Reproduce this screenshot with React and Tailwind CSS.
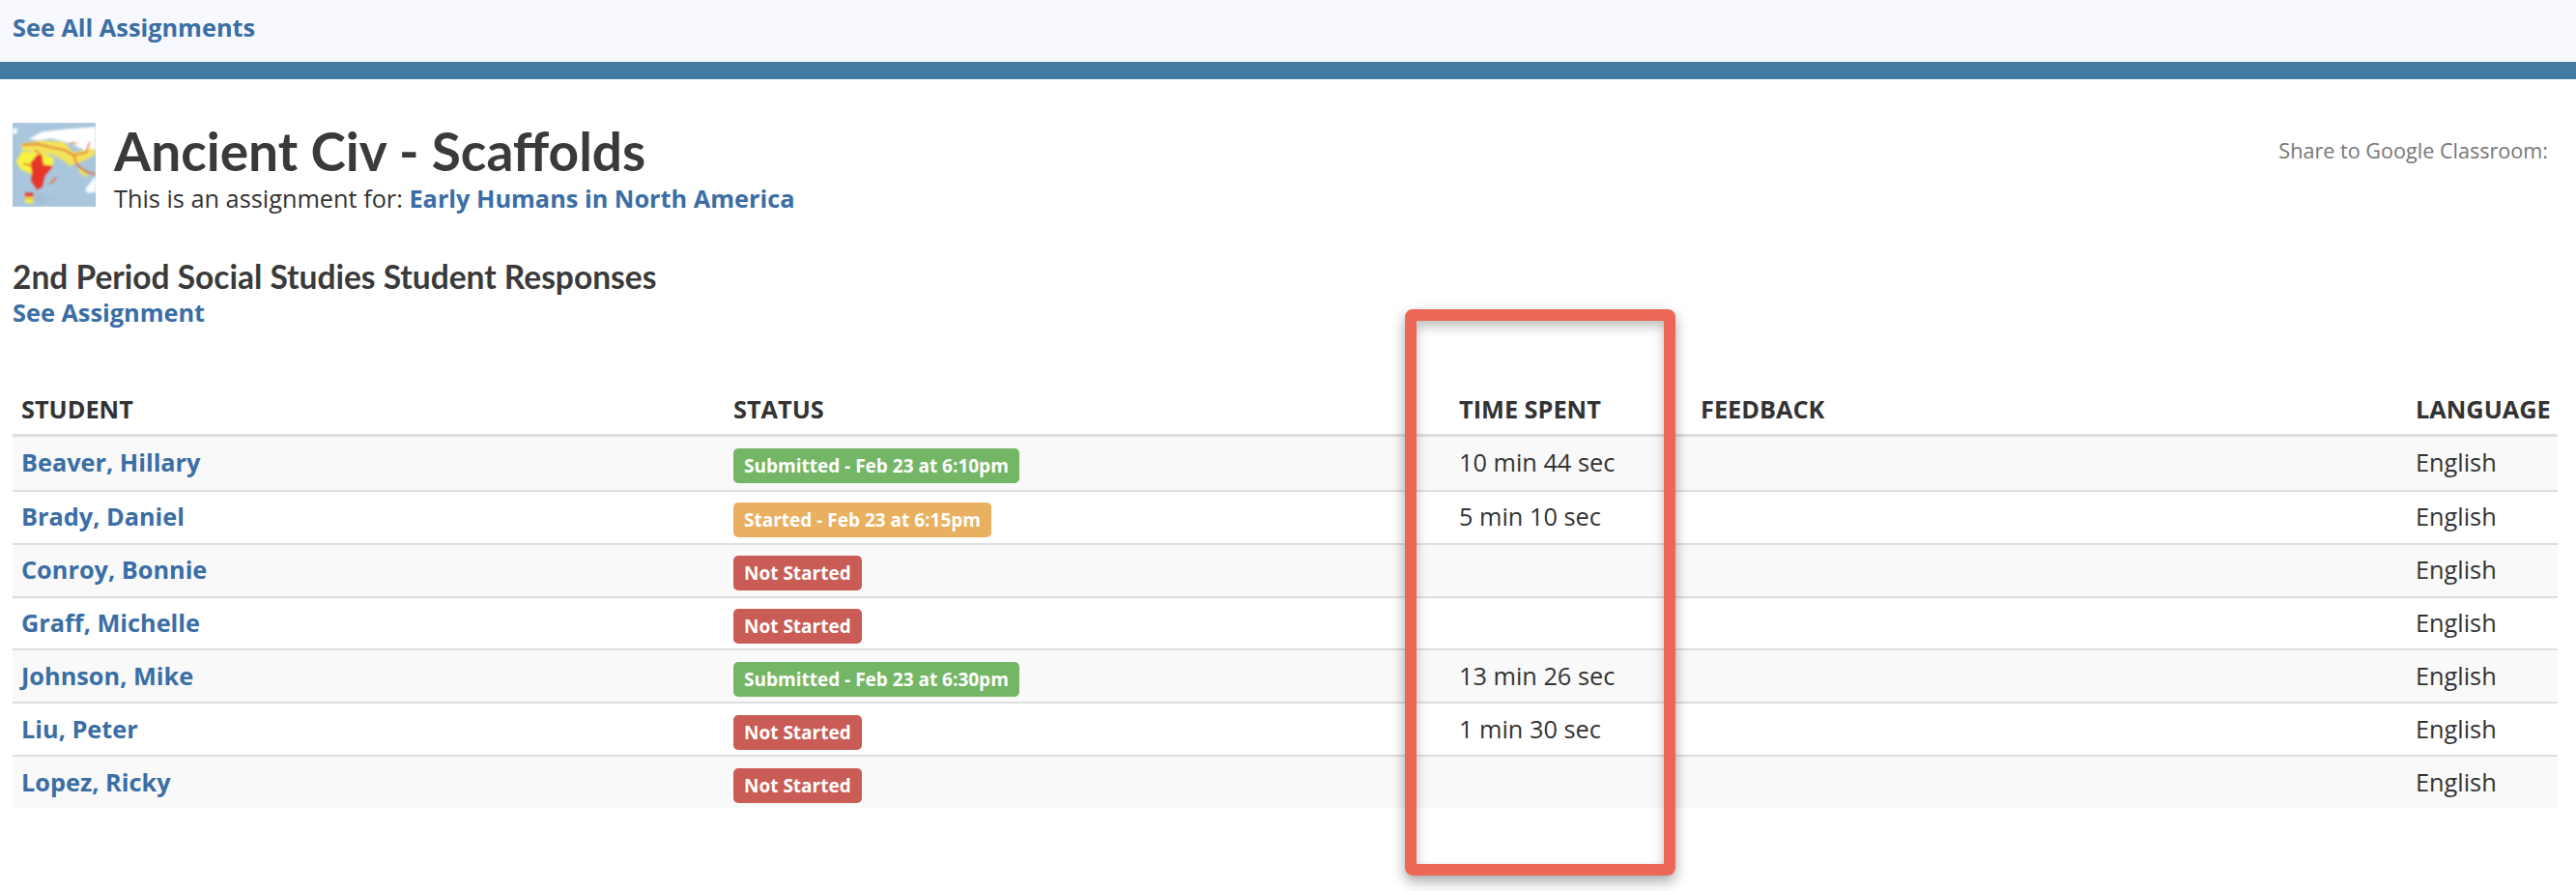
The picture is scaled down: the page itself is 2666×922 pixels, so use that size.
import React from 'react'

const rows = [
  { name: 'Beaver, Hillary', status: 'Submitted - Feb 23 at 6:10pm', kind: 'green', time: '10 min 44 sec' },
  { name: 'Brady, Daniel', status: 'Started - Feb 23 at 6:15pm', kind: 'orange', time: '5 min 10 sec' },
  { name: 'Conroy, Bonnie', status: 'Not Started', kind: 'red', time: '' },
  { name: 'Graff, Michelle', status: 'Not Started', kind: 'red', time: '' },
  { name: 'Johnson, Mike', status: 'Submitted - Feb 23 at 6:30pm', kind: 'green', time: '13 min 26 sec' },
  { name: 'Liu, Peter', status: 'Not Started', kind: 'red', time: '1 min 30 sec' },
  { name: 'Lopez, Ricky', status: 'Not Started', kind: 'red', time: '' },
]

const badgeColors = {
  green: 'bg-[#74b666]',
  orange: 'bg-[#e8b05f]',
  red: 'bg-[#c95c55]',
}

const cols = 'grid grid-cols-[737px_751px_250px_740px_156px]'

function MapThumb() {
  return (
    <svg width="86" height="87" viewBox="0 0 258 260" className="shrink-0">
      <defs>
        <filter id="soft"><feGaussianBlur stdDeviation="3" /></filter>
      </defs>
      <rect width="258" height="260" fill="#a9c6dc" />
      <g filter="url(#soft)">
        <path d="M50 50 L90 28 L160 20 L258 12 L258 85 L222 84 L176 62 L120 48 L82 54 Z" fill="#fff" />
        <path d="M0 18 L16 16 L12 32 L0 36 Z" fill="#fff" />
        <path d="M226 205 L258 165 L258 215 L232 218 Z" fill="#fff" />
        <path d="M26 65 L90 55 L160 58 L188 92 L250 78 L258 98 L222 118 L176 134 L160 118 L128 100 L30 85 Z" fill="#f2e25c" />
        <path d="M11 120 L30 88 L90 94 L128 108 L126 130 L96 154 L90 190 L60 160 L26 144 Z" fill="#f8f23f" />
        <path d="M202 140 L220 150 L238 170 L214 160 Z" fill="#f7e94a" />
        <path d="M56 124 L76 99 L91 99 L96 130 L126 134 L100 165 L92 200 L75 207 L58 180 L60 150 Z" fill="#e8352c" />
        <path d="M30 68 L80 66 L120 76 L160 84 L190 100 L228 92 L240 60 M70 84 L88 100 M190 100 L200 130 L224 150 L258 160 M34 126 L58 134 M116 190 L136 170 M180 62 L200 64"
          fill="none" stroke="#e86a30" strokeWidth="5" />
        <rect x="39" y="217" width="25" height="12" fill="#e8352c" />
        <rect x="39" y="229" width="25" height="10" fill="#f3c93c" />
        <rect x="39" y="239" width="25" height="10" fill="#f8f23f" />
        <path d="M70 223 H92 M70 234 H130 M70 244 H104" stroke="#8ea6b6" strokeWidth="2" />
      </g>
    </svg>
  )
}

export default function App() {
  return (
    <div className="relative min-h-[922px] bg-white text-[#333] font-['Open_Sans',sans-serif] text-[25.3px]">
      <div className="h-16 bg-[#f8f8ff] px-[13px] pb-[6px] flex items-center">
        <a className="font-bold text-[#3a6ea5]">See All Assignments</a>
      </div>
      <div className="h-[18px] bg-[#417ba1]" />

      <div className="px-[13px] pt-[45px] flex justify-between items-start">
        <div className="flex gap-[19px]">
          <MapThumb />
          <div>
            <h1 className="font-['Lato',sans-serif] font-bold text-[55px] leading-[58px] text-[#3a3a3a]">Ancient Civ - Scaffolds</h1>
            <p className="leading-[34px] mt-[3px]">
              This is an assignment for: <a className="font-bold text-[#3a6ea5]">Early Humans in North America</a>
            </p>
          </div>
        </div>
        <div className="text-[21.6px] text-[#777] pr-[16px] pt-[13px]">Share to Google Classroom:</div>
      </div>

      <div className="px-[13px] pt-[44px]">
        <h2 className="font-['Lato',sans-serif] font-bold text-[33.5px] leading-[40px] text-[#3a3a3a]">2nd Period Social Studies Student Responses</h2>
        <a className="block font-bold text-[#3a6ea5] leading-[34px]">See Assignment</a>

        <div className="mt-[59px] w-[2634px]">
          <div className={`${cols} h-[53px] items-center font-bold border-b-[3px] border-[#ddd]`}>
            <div className="pl-[9px]">STUDENT</div>
            <div className="pl-[9px]">STATUS</div>
            <div className="pl-[9px]">TIME SPENT</div>
            <div className="pl-[9px]">FEEDBACK</div>
            <div className="pl-[9px]">LANGUAGE</div>
          </div>
          {rows.map((r, i) => (
            <div key={r.name} className={`${cols} h-[54.86px] items-center ${i % 2 === 0 ? 'bg-[#f9f9f9]' : 'bg-white'} ${i > 0 ? 'border-t-2 border-[#ddd]' : ''}`}>
              <a className="pl-[9px] font-bold text-[#3a6ea5]">{r.name}</a>
              <div className="pl-[9px] pt-[3px]">
                <span className={`inline-block h-9 leading-9 px-[11px] rounded-[5px] text-white font-bold text-[19px] ${badgeColors[r.kind]}`}>{r.status}</span>
              </div>
              <div className="pl-[9px]">{r.time}</div>
              <div />
              <div className="pl-[9px]">English</div>
            </div>
          ))}
        </div>
      </div>

      <div className="absolute left-[1454px] top-[320px] w-[280px] h-[586px] border-[12px] border-[#ec6755] rounded-[8px] shadow-[0_6px_14px_rgba(0,0,0,0.35),inset_0_6px_12px_rgba(0,0,0,0.25)]" />
    </div>
  )
}
